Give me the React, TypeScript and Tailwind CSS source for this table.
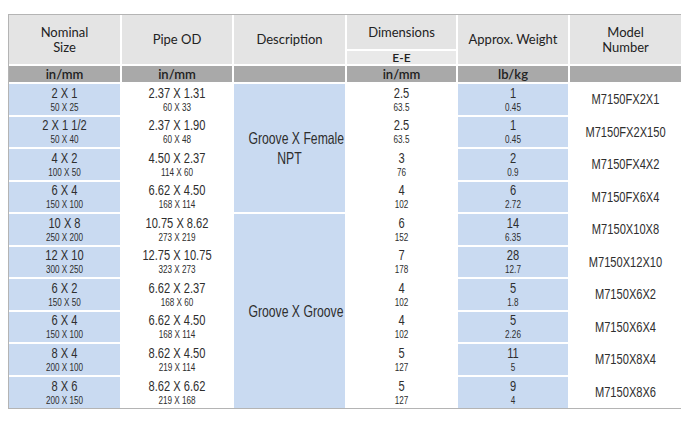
import React from "react";

const rows = [
  { size: ["2 X 1", "50 X 25"], od: ["2.37 X 1.31", "60 X 33"], ee: ["2.5", "63.5"], wt: ["1", "0.45"], model: "M7150FX2X1" },
  { size: ["2 X 1 1/2", "50 X 40"], od: ["2.37 X 1.90", "60 X 48"], ee: ["2.5", "63.5"], wt: ["1", "0.45"], model: "M7150FX2X150" },
  { size: ["4 X 2", "100 X 50"], od: ["4.50 X 2.37", "114 X 60"], ee: ["3", "76"], wt: ["2", "0.9"], model: "M7150FX4X2" },
  { size: ["6 X 4", "150 X 100"], od: ["6.62 X 4.50", "168 X 114"], ee: ["4", "102"], wt: ["6", "2.72"], model: "M7150FX6X4" },
  { size: ["10 X 8", "250 X 200"], od: ["10.75 X 8.62", "273 X 219"], ee: ["6", "152"], wt: ["14", "6.35"], model: "M7150X10X8" },
  { size: ["12 X 10", "300 X 250"], od: ["12.75 X 10.75", "323 X 273"], ee: ["7", "178"], wt: ["28", "12.7"], model: "M7150X12X10" },
  { size: ["6 X 2", "150 X 50"], od: ["6.62 X 2.37", "168 X 60"], ee: ["4", "102"], wt: ["5", "1.8"], model: "M7150X6X2" },
  { size: ["6 X 4", "150 X 100"], od: ["6.62 X 4.50", "168 X 114"], ee: ["4", "102"], wt: ["5", "2.26"], model: "M7150X6X4" },
  { size: ["8 X 4", "200 X 100"], od: ["8.62 X 4.50", "219 X 114"], ee: ["5", "127"], wt: ["11", "5"], model: "M7150X8X4" },
  { size: ["8 X 6", "200 X 150"], od: ["8.62 X 6.62", "219 X 168"], ee: ["5", "127"], wt: ["9", "4"], model: "M7150X8X6" },
];

const head = "font-['Lato','Open_Sans',sans-serif] text-[13px] leading-[15px] text-[#222]";
// Helvetica Condensed look: Arial metrics squeezed to condensed width
const cond = "font-['Liberation_Sans','Arial',sans-serif] text-[#2e2e2e] scale-x-[0.74] whitespace-nowrap";
const cell = "border-2 border-white text-center align-middle p-0";

function Pair({ v }: { v: string[] }) {
  return (
    <div className={cond}>
      <div className="text-[15px] leading-[16px]">{v[0]}</div>
      <div className="text-[11px] leading-[13px]">{v[1]}</div>
    </div>
  );
}

export default function App() {
  return (
    <div className="w-[691px] h-[421px] bg-white pt-[14px] pl-[8px]">
      <div className="w-[673px] border border-[#b4b4b4]">
        <table className="w-full table-fixed border-collapse border-hidden">
          <colgroup>
            <col className="w-[112px]" />
            <col className="w-[112px]" />
            <col className="w-[113px]" />
            <col className="w-[111px]" />
            <col className="w-[112px]" />
            <col className="w-[112px]" />
          </colgroup>
          <thead>
            <tr className="h-[35px]">
              <th rowSpan={2} className={`${cell} ${head} font-normal bg-[#e4e4e4]`}>Nominal<br />Size</th>
              <th rowSpan={2} className={`${cell} ${head} font-normal bg-[#e4e4e4]`}>Pipe OD</th>
              <th rowSpan={2} className={`${cell} ${head} font-normal bg-[#e4e4e4]`}>Description</th>
              <th className={`${cell} ${head} font-normal bg-[#e4e4e4]`}>Dimensions</th>
              <th rowSpan={2} className={`${cell} ${head} font-normal bg-[#e4e4e4]`}>Approx. Weight</th>
              <th rowSpan={2} className={`${cell} ${head} font-normal bg-[#e4e4e4]`}>Model<br />Number</th>
            </tr>
            <tr className="h-[15px]">
              <th className={`${cell} ${head} font-semibold bg-[#e9e9e9] !text-[12px] !leading-[13px]`}>E-E</th>
            </tr>
            <tr className="h-[18px]">
              <th className={`${cell} ${head} font-semibold bg-[#a9a9a9]`}>in/mm</th>
              <th className={`${cell} ${head} font-semibold bg-[#a9a9a9]`}>in/mm</th>
              <th className={`${cell} bg-[#a9a9a9]`}></th>
              <th className={`${cell} ${head} font-semibold bg-[#a9a9a9]`}>in/mm</th>
              <th className={`${cell} ${head} font-semibold bg-[#a9a9a9]`}>lb/kg</th>
              <th className={`${cell} bg-[#a9a9a9]`}></th>
            </tr>
          </thead>
          <tbody>
            {rows.map((r, i) => (
              <tr key={i} className="h-[32.5px]">
                <td className={`${cell} bg-[#c9daf1]`}><Pair v={r.size} /></td>
                <td className={`${cell} bg-white`}><Pair v={r.od} /></td>
                {i === 0 && (
                  <td rowSpan={4} className={`${cell} bg-[#c9daf1]`}>
                    <div className={`${cond} text-[16.5px] leading-[20px]`}>Groove X Female<br />NPT</div>
                  </td>
                )}
                {i === 4 && (
                  <td rowSpan={6} className={`${cell} bg-[#c9daf1]`}>
                    <div className={`${cond} text-[16.5px] leading-[20px]`}>Groove X Groove</div>
                  </td>
                )}
                <td className={`${cell} bg-white`}><Pair v={r.ee} /></td>
                <td className={`${cell} bg-[#c9daf1]`}><Pair v={r.wt} /></td>
                <td className={`${cell} bg-white`}>
                  <div className={`${cond} text-[15px]`}>{r.model}</div>
                </td>
              </tr>
            ))}
          </tbody>
        </table>
      </div>
    </div>
  );
}
